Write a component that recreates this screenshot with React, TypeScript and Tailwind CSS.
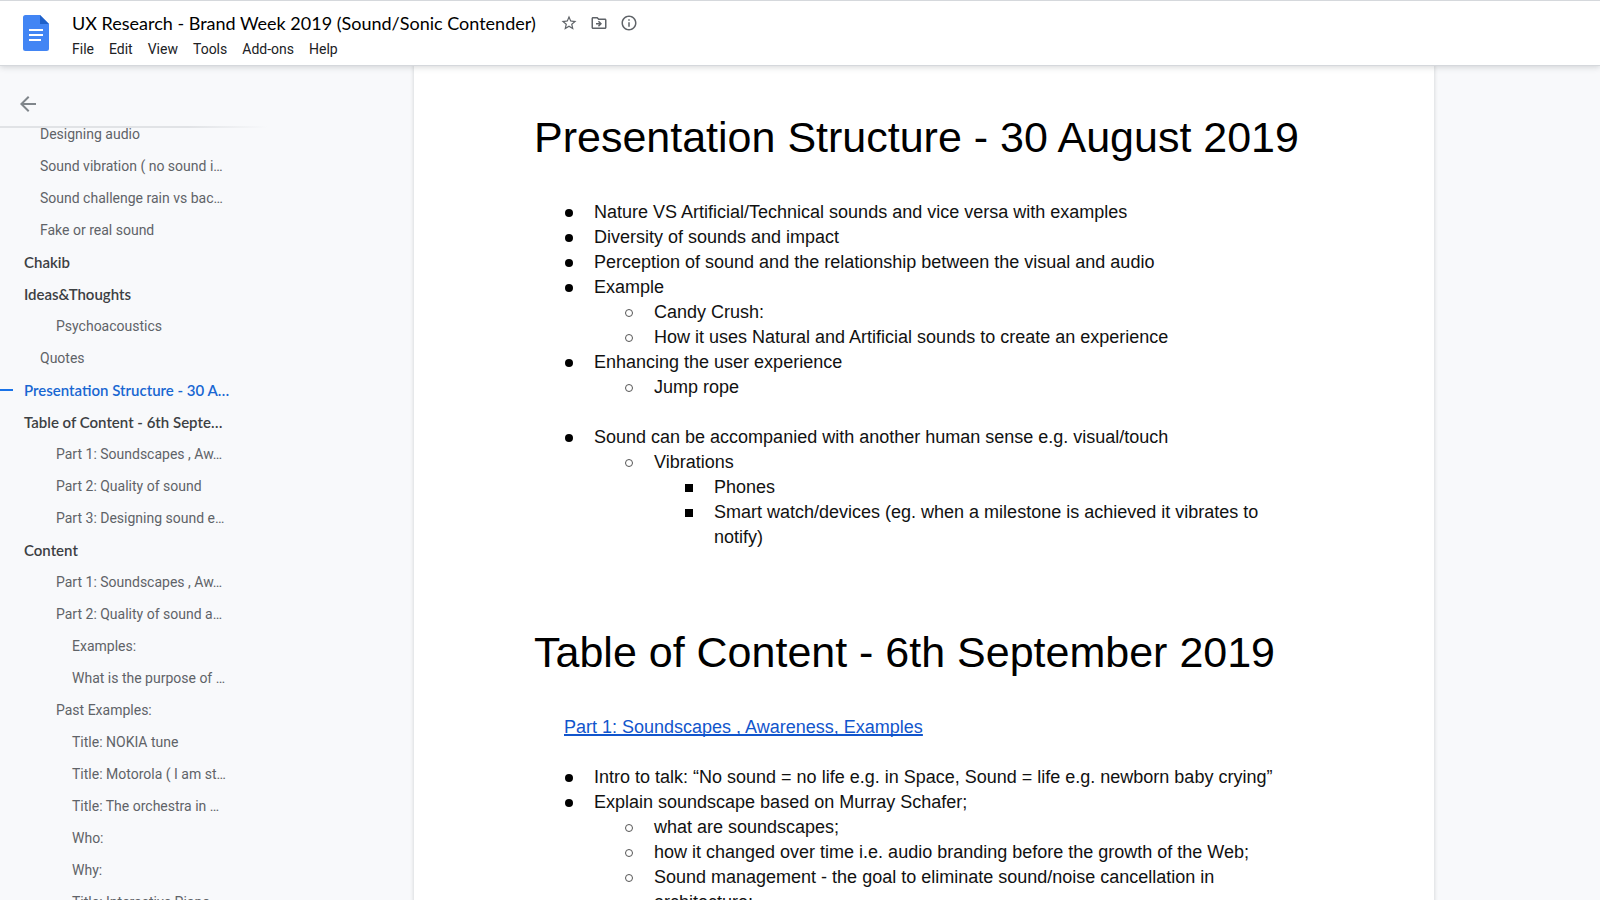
import type { ReactNode } from "react";
import { MdArrowBack, MdInfoOutline, MdOutlineDriveFileMove, MdStarBorder } from "react-icons/md";

const menus = ["File", "Edit", "View", "Tools", "Add-ons", "Help"];

type OutlineItem = { text: string; level: 0 | 1 | 2 | 3; active?: boolean };

const outline: OutlineItem[] = [
  { text: "Designing audio", level: 1 },
  { text: "Sound vibration ( no sound i…", level: 1 },
  { text: "Sound challenge rain vs bac…", level: 1 },
  { text: "Fake or real sound", level: 1 },
  { text: "Chakib", level: 0 },
  { text: "Ideas&Thoughts", level: 0 },
  { text: "Psychoacoustics", level: 2 },
  { text: "Quotes", level: 1 },
  { text: "Presentation Structure - 30 A…", level: 0, active: true },
  { text: "Table of Content - 6th Septe…", level: 0 },
  { text: "Part 1: Soundscapes , Aw…", level: 2 },
  { text: "Part 2: Quality of sound", level: 2 },
  { text: "Part 3: Designing sound e…", level: 2 },
  { text: "Content", level: 0 },
  { text: "Part 1: Soundscapes , Aw…", level: 2 },
  { text: "Part 2: Quality of sound a…", level: 2 },
  { text: "Examples:", level: 3 },
  { text: "What is the purpose of …", level: 3 },
  { text: "Past Examples:", level: 2 },
  { text: "Title: NOKIA tune", level: 3 },
  { text: "Title: Motorola ( I am st…", level: 3 },
  { text: "Title: The orchestra in …", level: 3 },
  { text: "Who:", level: 3 },
  { text: "Why:", level: 3 },
  { text: "Title: Interactive Piano", level: 3 },
];

const indents = ["pl-6", "pl-10", "pl-14", "pl-[72px]"];

const markers = {
  disc: "size-2 rounded-full bg-black",
  circle: "size-2 rounded-full border border-[#555]",
  square: "size-2 bg-black",
};

function Item({
  text,
  marker = "disc",
  children,
}: {
  text: string;
  marker?: keyof typeof markers;
  children?: ReactNode;
}) {
  return (
    <li>
      <div className="flex">
        <span aria-hidden="true" className="flex w-[29px] shrink-0 items-start pt-[9px]">
          <span className={markers[marker]} />
        </span>
        <p className="min-w-0">{text}</p>
      </div>
      {children && <ul className="pl-[60px]">{children}</ul>}
    </li>
  );
}

function Title({ children }: { children: ReactNode }) {
  return <h1 className="text-[43px] leading-[50px] text-black">{children}</h1>;
}

function DocsLogo() {
  return (
    <svg width="26" height="36" viewBox="0 0 26 36" aria-hidden="true">
      <path d="M2.5 0H17l9 9v24.5a2.5 2.5 0 0 1-2.5 2.5h-21A2.5 2.5 0 0 1 0 33.500v-31A2.500 2.500 0 0 1 2.500 0z" fill="#4285f4" />
      <path d="M17 0l9 9h-9z" fill="#1f61c9" />
      <path d="M6 14h14v2H6zM6 19h14v2H6zM6 24h12v2H6z" fill="#fff" />
    </svg>
  );
}

export default function App() {
  return (
    <div className="flex h-screen flex-col overflow-hidden bg-[#f8f9fb] font-[Roboto,sans-serif]">
      <header className="relative z-10 flex h-[66px] shrink-0 items-start border-y border-[#d5d8dc] bg-white pl-[23px] shadow-[0_1px_6px_rgba(60,64,67,0.22)]">
        <a href="#home" aria-label="Docs home" className="mt-[14px]">
          <DocsLogo />
        </a>
        <div className="ml-4 pt-[9px]">
          <div className="flex items-center pl-[7px]">
            <h2 className="font-[Lato,sans-serif] text-lg leading-[26px] whitespace-nowrap text-black">
              UX Research - Brand Week 2019 (Sound/Sonic Contender)
            </h2>
            <div className="ml-6 flex items-center gap-3 text-[#5f6368]">
              <button type="button" aria-label="Star"><MdStarBorder size={18} /></button>
              <button type="button" aria-label="Move"><MdOutlineDriveFileMove size={18} /></button>
              <button type="button" aria-label="Document status"><MdInfoOutline size={18} /></button>
            </div>
          </div>
          <nav className="flex gap-px text-sm leading-[26px] text-[#202124]">
            {menus.map((m) => (
              <button key={m} type="button" className="px-[7px]">{m}</button>
            ))}
          </nav>
        </div>
      </header>

      <div className="flex min-h-0 flex-1">
        <aside className="flex w-[248px] shrink-0 flex-col">
          <div className="flex h-[62px] w-[268px] shrink-0 flex-col justify-between">
            <button type="button" aria-label="Close document outline" className="mt-[26px] ml-4 self-start text-[#80868b]">
              <MdArrowBack size={24} />
            </button>
            <div className="h-[2px] shrink-0 bg-linear-to-r from-[#e1e3e6] from-70% to-transparent" />
          </div>
          <nav aria-label="Document outline" className="min-h-0 flex-1 overflow-hidden">
            <ul className="-mt-[10px]">
              {outline.map((o, i) => (
                <li key={i} className="flex h-8 items-center">
                  {o.active && <span className="-mr-[13px] h-[2px] w-[13px] bg-[#1a73e8]" />}
                  <a
                    href="#section"
                    className={`${indents[o.level]} whitespace-nowrap ${
                      o.active
                        ? "font-[Lato,sans-serif] text-[15px] font-semibold text-[#1967d2]"
                        : o.level === 0
                          ? "font-[Lato,sans-serif] text-[15px] font-semibold text-[#3c4043]"
                          : "text-sm text-[#5f6368]"
                    }`}
                  >
                    {o.text}
                  </a>
                </li>
              ))}
            </ul>
          </nav>
        </aside>

        <main className="flex min-w-0 flex-1 justify-center overflow-hidden">
          <article className="w-full max-w-[1020px] self-start bg-white pt-[46px] pr-[130px] pb-24 pl-[120px] font-['Liberation_Sans',sans-serif] text-lg leading-[25px] text-[#111] shadow-[0_0_3px_1px_rgba(60,64,67,0.15)]">
            <Title>Presentation Structure - 30 August 2019</Title>
            <ul className="mt-[38px] pl-[31px]">
              <Item text="Nature VS Artificial/Technical sounds and vice versa with examples" />
              <Item text="Diversity of sounds and impact" />
              <Item text="Perception of sound and the relationship between the visual and audio" />
              <Item text="Example">
                <Item marker="circle" text="Candy Crush:" />
                <Item marker="circle" text="How it uses Natural and Artificial sounds to create an experience" />
              </Item>
              <Item text="Enhancing the user experience">
                <Item marker="circle" text="Jump rope" />
              </Item>
            </ul>
            <ul className="mt-[25px] pl-[31px]">
              <Item text="Sound can be accompanied with another human sense e.g. visual/touch">
                <Item marker="circle" text="Vibrations">
                  <Item marker="square" text="Phones" />
                  <Item marker="square" text="Smart watch/devices (eg. when a milestone is achieved it vibrates to notify)" />
                </Item>
              </Item>
            </ul>
            <div className="mt-[77px]">
              <Title>Table of Content - 6th September 2019</Title>
            </div>
            <p className="mt-[38px] pl-[30px]">
              <a href="#part-1" className="text-[#1155cc] underline decoration-2 underline-offset-1 [text-decoration-skip-ink:none]">
                Part 1: Soundscapes , Awareness, Examples
              </a>
            </p>
            <ul className="mt-[25px] pl-[31px]">
              <Item text="Intro to talk: “No sound = no life e.g. in Space, Sound = life e.g. newborn baby crying”" />
              <Item text="Explain soundscape based on Murray Schafer;">
                <Item marker="circle" text="what are soundscapes;" />
                <Item marker="circle" text="how it changed over time i.e. audio branding before the growth of the Web;" />
                <Item marker="circle" text="Sound management - the goal to eliminate sound/noise cancellation in architecture;" />
              </Item>
            </ul>
          </article>
        </main>
      </div>
    </div>
  );
}
